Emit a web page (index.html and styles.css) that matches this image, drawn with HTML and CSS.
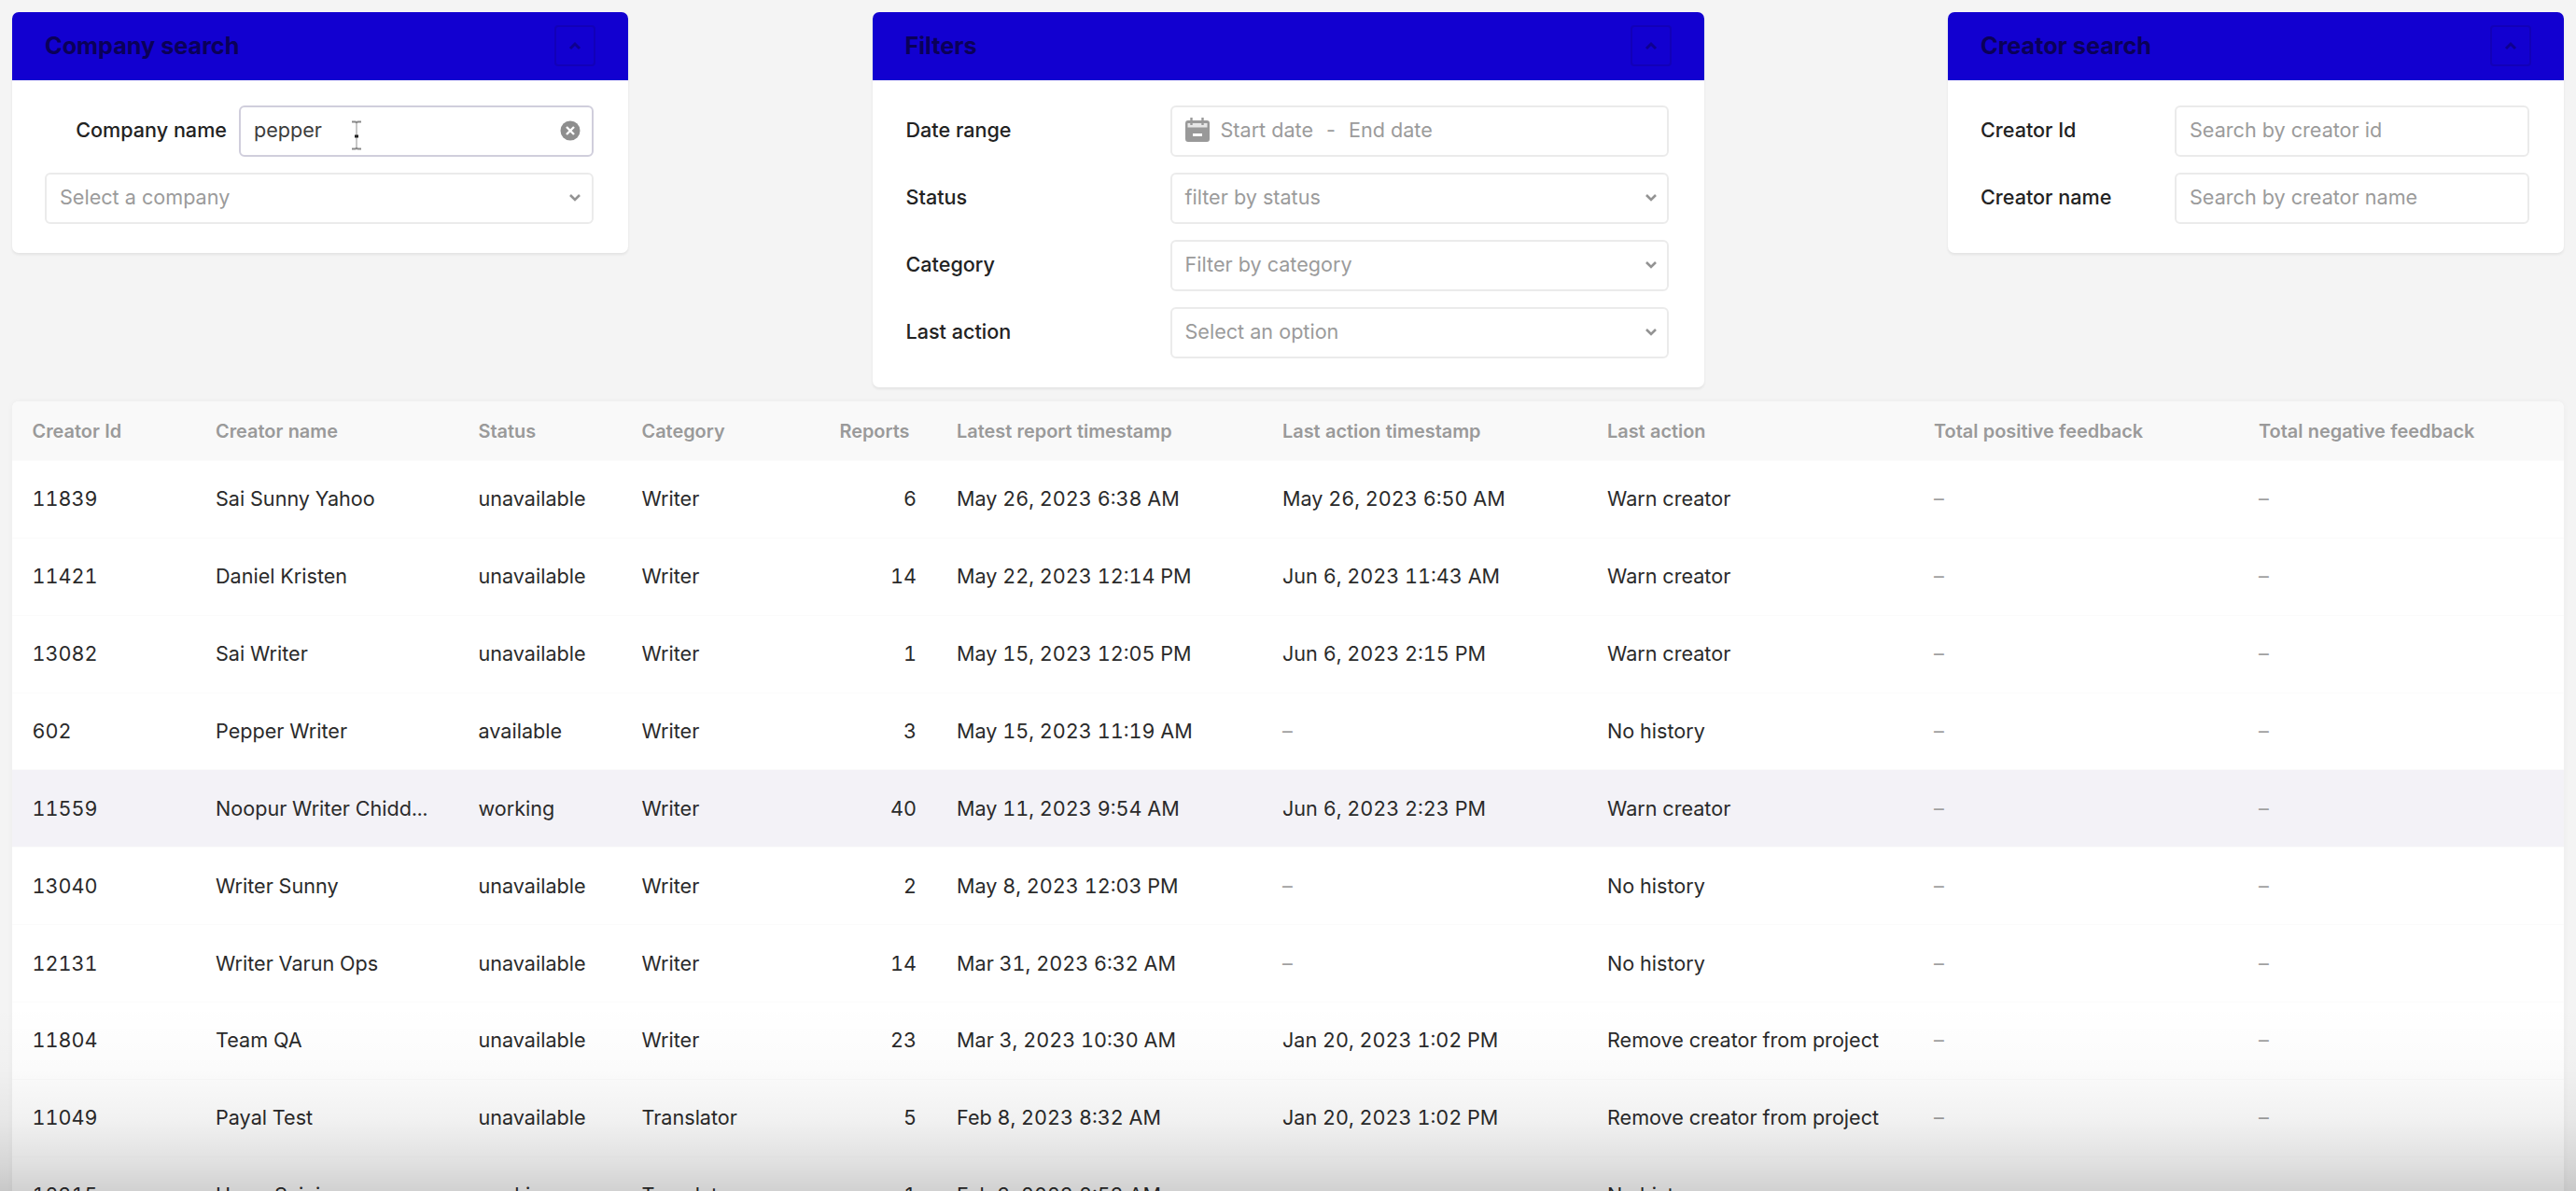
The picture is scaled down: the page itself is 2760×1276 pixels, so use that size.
FILE: index.html
```
<!DOCTYPE html>
<html lang="en">
<head>
<meta charset="utf-8">
<title>Creator reports</title>
<link rel="stylesheet" href="styles.css">
</head>
<body>
<svg class="defs" aria-hidden="true">
  <symbol id="down" viewBox="0 0 14 10"><path d="M2 2l5 5 5-5" fill="none" stroke="currentColor" stroke-width="2.6"/></symbol>
  <symbol id="up" viewBox="0 0 14 10"><path d="M2 8l5-5 5 5" fill="none" stroke="currentColor" stroke-width="3"/></symbol>
</svg>
<main class="page">
  <div class="panels">
    <section class="card company">
      <header class="card-head"><h2>Company search</h2><button class="toggle"><svg><use href="#up"/></svg></button></header>
      <div class="card-body">
        <div class="field"><label>Company name</label>
          <div class="control focused"><span class="value">pepper</span>
            <svg class="clear" viewBox="0 0 22 22"><circle cx="11" cy="11" r="10.5" fill="#8e8e8e"/><path d="M7 7l8 8M15 7l-8 8" stroke="#fff" stroke-width="2.4"/></svg>
            <svg class="cursor" viewBox="0 0 14 34"><path d="M2 2.5h3.500q1.500 0 1.500 2q0-2 1.500-2H12M2 31.500h3.500q1.500 0 1.500-2q0 2 1.500 2H12" fill="none" stroke="#8a8a8a" stroke-width="2"/><path d="M7 5v24" stroke="#b9b9b9" stroke-width="1.600"/><path d="M5 18h4" stroke="#222" stroke-width="3"/></svg>
          </div>
        </div>
        <div class="field"><div class="control">Select a company<svg class="chev"><use href="#down"/></svg></div></div>
      </div>
    </section>
    <section class="card filters">
      <header class="card-head"><h2>Filters</h2><button class="toggle"><svg><use href="#up"/></svg></button></header>
      <div class="card-body">
        <div class="field"><label>Date range</label>
          <div class="control date"><svg class="cal" viewBox="0 0 26 28"><path d="M3 4h20q3 0 3 3v17q0 3-3 3H3q-3 0-3-3V7q0-3 3-3z" fill="#999"/><path d="M2.500 7h21v4.500h-21z" fill="#e6e6e6"/><path d="M6.500 1v8M18.500 1v8" stroke="#999" stroke-width="2.400"/><path d="M8 19.500h10" stroke="#fff" stroke-width="3"/></svg><span>Start date</span><span class="dash">-</span><span>End date</span></div></div>
        <div class="field"><label>Status</label><div class="control">filter by status<svg class="chev"><use href="#down"/></svg></div></div>
        <div class="field"><label>Category</label><div class="control">Filter by category<svg class="chev"><use href="#down"/></svg></div></div>
        <div class="field"><label>Last action</label><div class="control">Select an option<svg class="chev"><use href="#down"/></svg></div></div>
      </div>
    </section>
    <section class="card creator">
      <header class="card-head"><h2>Creator search</h2><button class="toggle"><svg><use href="#up"/></svg></button></header>
      <div class="card-body">
        <div class="field"><label>Creator Id</label><div class="control">Search by creator id</div></div>
        <div class="field"><label>Creator name</label><div class="control">Search by creator name</div></div>
      </div>
    </section>
  </div>
  <div class="table">
    <div class="row head"><span>Creator Id</span><span>Creator name</span><span>Status</span><span>Category</span><span class="num">Reports</span><span>Latest report timestamp</span><span>Last action timestamp</span><span>Last action</span><span>Total positive feedback</span><span>Total negative feedback</span></div>
    <div class="row"><span>11839</span><span>Sai Sunny Yahoo</span><span>unavailable</span><span>Writer</span><span class="num">6</span><span>May 26, 2023 6:38 AM</span><span>May 26, 2023 6:50 AM</span><span>Warn creator</span><span class="nil">–</span><span class="nil">–</span></div>
    <div class="row"><span>11421</span><span>Daniel Kristen</span><span>unavailable</span><span>Writer</span><span class="num">14</span><span>May 22, 2023 12:14 PM</span><span>Jun 6, 2023 11:43 AM</span><span>Warn creator</span><span class="nil">–</span><span class="nil">–</span></div>
    <div class="row"><span>13082</span><span>Sai Writer</span><span>unavailable</span><span>Writer</span><span class="num">1</span><span>May 15, 2023 12:05 PM</span><span>Jun 6, 2023 2:15 PM</span><span>Warn creator</span><span class="nil">–</span><span class="nil">–</span></div>
    <div class="row"><span>602</span><span>Pepper Writer</span><span>available</span><span>Writer</span><span class="num">3</span><span>May 15, 2023 11:19 AM</span><span class="nil">–</span><span>No history</span><span class="nil">–</span><span class="nil">–</span></div>
    <div class="row hover"><span>11559</span><span>Noopur Writer Chidd...</span><span>working</span><span>Writer</span><span class="num">40</span><span>May 11, 2023 9:54 AM</span><span>Jun 6, 2023 2:23 PM</span><span>Warn creator</span><span class="nil">–</span><span class="nil">–</span></div>
    <div class="row"><span>13040</span><span>Writer Sunny</span><span>unavailable</span><span>Writer</span><span class="num">2</span><span>May 8, 2023 12:03 PM</span><span class="nil">–</span><span>No history</span><span class="nil">–</span><span class="nil">–</span></div>
    <div class="row"><span>12131</span><span>Writer Varun Ops</span><span>unavailable</span><span>Writer</span><span class="num">14</span><span>Mar 31, 2023 6:32 AM</span><span class="nil">–</span><span>No history</span><span class="nil">–</span><span class="nil">–</span></div>
    <div class="row"><span>11804</span><span>Team QA</span><span>unavailable</span><span>Writer</span><span class="num">23</span><span>Mar 3, 2023 10:30 AM</span><span>Jan 20, 2023 1:02 PM</span><span>Remove creator from project</span><span class="nil">–</span><span class="nil">–</span></div>
    <div class="row"><span>11049</span><span>Payal Test</span><span>unavailable</span><span>Translator</span><span class="num">5</span><span>Feb 8, 2023 8:32 AM</span><span>Jan 20, 2023 1:02 PM</span><span>Remove creator from project</span><span class="nil">–</span><span class="nil">–</span></div>
    <div class="row"><span>12315</span><span>Harry Saini</span><span>working</span><span>Translator</span><span class="num">1</span><span>Feb 3, 2023 8:53 AM</span><span class="nil">–</span><span>No history</span><span class="nil">–</span><span class="nil">–</span></div>
  </div>
</main>
<div class="shade"></div>
</body>
</html>
```
FILE: styles.css
```
* { box-sizing: border-box; }
body {
  margin: 0;
  height: 1276px;
  overflow: hidden;
  position: relative;
  background: #f4f4f4;
  color: #2a2a2a;
  font: 400 21.6px/1.2 Inter, "Liberation Sans", sans-serif;
}
.defs { display: none; }
.page { padding: 13px 13px 0; }

.panels {
  display: flex;
  justify-content: space-between;
  align-items: flex-start;
  height: 417px;
}
.card {
  background: #fff;
  border-radius: 7px;
  box-shadow: 0 2px 3px rgba(0, 0, 0, .07);
}
.company { width: 660px; }
.filters { width: 891px; }
.creator { width: 660px; }
.card-head {
  display: flex;
  align-items: center;
  justify-content: space-between;
  height: 72.500px;
  padding: 0 35px 1px 35px;
  background: #1200d0;
  border-radius: 7px 7px 0 0;
}
.card-head h2 {
  margin: 0;
  font-size: 25.200px;
  font-weight: 700;
  color: #0a0058;
}
.toggle {
  display: flex;
  align-items: center;
  justify-content: center;
  width: 44px;
  height: 44px;
  padding: 0;
  background: none;
  border: 2px solid #1200b8;
  border-radius: 4px;
  color: #0e0090;
}
.toggle svg { width: 14px; height: 10px; }
.card-body {
  display: flex;
  flex-direction: column;
  gap: 17px;
  padding: 27px 37.500px 31px 35px;
}
.filters .card-body { padding: 27px 38px 31px 36px; }
.field { display: flex; align-items: center; }
.field label {
  flex: none;
  font-weight: 500;
  color: #222;
}
.company label { width: 208px; text-align: right; padding-right: 13px; }
.filters label { width: 283px; }
.creator label { width: 208px; }
.control {
  position: relative;
  flex: 1;
  display: flex;
  align-items: center;
  height: 55px;
  padding: 0 14px;
  background: #fff;
  border: 2px solid #ebebeb;
  border-radius: 6px;
  color: #9b9b9b;
  white-space: nowrap;
}
.company .control { padding-right: 12px; }
.control.focused { border-color: #d0cedc; color: #3c3c3c; }
.chev {
  width: 14px;
  height: 10px;
  margin-left: auto;
  margin-right: -4px;
  color: #939393;
}
.company .chev { margin-right: -1px; }
.clear { width: 22px; height: 22px; margin-left: auto; }
.cursor {
  position: absolute;
  left: 117px;
  top: 13px;
  width: 14px;
  height: 34px;
}
.cal { width: 26px; height: 28px; margin: -2px 12px 0 0; }
.dash { margin: 0 14px; }

.table {
  background: #fff;
  border-radius: 7px 7px 0 0;
  overflow: hidden;
  box-shadow: 0 0 6px rgba(0, 0, 0, .04);
}
.row {
  display: grid;
  grid-template-columns: 196.500px 281.500px 175px 175px 162.500px 349px 348px 350px 348px 1fr;
  align-items: center;
  height: 82.850px;
  padding-top: 1px;
  border-bottom: 1px solid #fbfbfb;
  font-variant-numeric: tabular-nums;
}
.row span { padding: 0 21.500px; white-space: nowrap; }
.row .num { text-align: right; }
.row .nil { color: #a0a0a0; }
.row.hover { background: #f3f2f7; }
.row.head {
  height: 64px;
  padding-top: 2px;
  background: #f9f9f9;
  color: #9a9a9a;
  font-size: 19.900px;
  font-weight: 600;
}
.row.head .num { padding-right: 29px; }

.shade {
  position: absolute;
  inset: auto 0 0;
  height: 200px;
  pointer-events: none;
  background: linear-gradient(rgba(0,0,0,0) 0%, rgba(0,0,0,.015) 34%, rgba(0,0,0,.055) 62%, rgba(0,0,0,.12) 85%, rgba(0,0,0,.18) 100%);
}
```
